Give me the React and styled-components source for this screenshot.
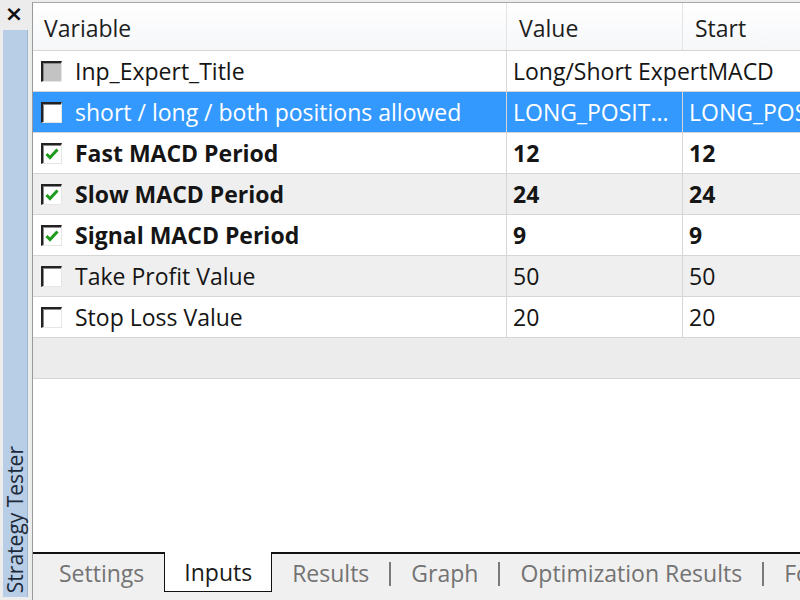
import styled, { createGlobalStyle, css } from "styled-components";

const GlobalStyle = createGlobalStyle`
  html, body {
    margin: 0;
    padding: 0;
    width: 800px;
    height: 600px;
    overflow: hidden;
    background: #ececec;
  }
  * {
    box-sizing: border-box;
  }
`;

const rows = [
  { name: "Inp_Expert_Title", value: "Long/Short ExpertMACD", start: "", check: "gray", span: true },
  { name: "short / long / both positions allowed", value: "LONG_POSIT...", start: "LONG_POSITION", check: "off", selected: true },
  { name: "Fast MACD Period", value: "12", start: "12", check: "on", bold: true },
  { name: "Slow MACD Period", value: "24", start: "24", check: "on", bold: true, alt: true },
  { name: "Signal MACD Period", value: "9", start: "9", check: "on", bold: true },
  { name: "Take Profit Value", value: "50", start: "50", check: "off", alt: true },
  { name: "Stop Loss Value", value: "20", start: "20", check: "off" },
];

const tabs = ["Settings", "Inputs", "Results", "Graph", "Optimization Results", "Forward Results"];

function CheckBox({ state }) {
  return (
    <Box $state={state}>
      {state === "on" && (
        <svg width="16" height="16" viewBox="0 0 16 16">
          <path d="M2.5 8 L6 11.5 L13.5 3.5" fill="none" stroke="#1c9b1c" strokeWidth="3" />
        </svg>
      )}
    </Box>
  );
}

function App() {
  return (
    <Window>
      <GlobalStyle />
      <SideBar>
        <CloseBtn>×</CloseBtn>
        <SideStrip>
          <SideTitle>Strategy Tester</SideTitle>
        </SideStrip>
      </SideBar>
      <Main>
        <Table>
          <HeaderRow>
            <HeadCell $first>Variable</HeadCell>
            <HeadCell>Value</HeadCell>
            <HeadCell>Start</HeadCell>
          </HeaderRow>
          {rows.map((r) => (
            <Row key={r.name} $selected={r.selected} $alt={r.alt} $bold={r.bold}>
              <NameCell>
                <CheckBox state={r.check} />
                <span>{r.name}</span>
              </NameCell>
              {r.span ? (
                <ValueCell $span>{r.value}</ValueCell>
              ) : (
                <>
                  <ValueCell>{r.value}</ValueCell>
                  <ValueCell>{r.start}</ValueCell>
                </>
              )}
            </Row>
          ))}
          <EmptyRow />
        </Table>
        <TabBar>
          {tabs.map((t, i) => (
            <TabGroup key={t}>
              {i > 2 && <TabSep />}
              <Tab $active={t === "Inputs"}>{t}</Tab>
            </TabGroup>
          ))}
        </TabBar>
      </Main>
    </Window>
  );
}

export default App;

const font = css`
  font-family: "Open Sans", "Liberation Sans", sans-serif;
  font-size: 23px;
`;

const Window = styled.div`
  display: flex;
  width: 800px;
  height: 600px;
  background: #ececec;
  ${font};
`;

const SideBar = styled.div`
  display: flex;
  flex-direction: column;
  width: 32px;
  flex-shrink: 0;
  padding-bottom: 3px;
`;

const CloseBtn = styled.div`
  height: 26px;
  display: flex;
  align-items: center;
  justify-content: center;
  padding-right: 4px;
  margin-bottom: 4px;
  font-family: "DejaVu Sans", sans-serif;
  font-weight: bold;
  font-size: 22px;
  color: #111;
`;

const SideStrip = styled.div`
  flex: 1;
  margin: 0 4px 0 3px;
  background: #b8cde6;
  border-right: 1px solid #9fb6d3;
  display: flex;
  align-items: flex-end;
  justify-content: center;
`;

const SideTitle = styled.div`
  writing-mode: vertical-rl;
  transform: rotate(180deg);
  color: #1d2a3a;
  font-size: 21px;
  line-height: 24px;
  padding-top: 4px;
  white-space: nowrap;
`;

const Main = styled.div`
  flex: 1;
  display: flex;
  flex-direction: column;
  margin-top: 2px;
  border-left: 1px solid #9a9a9a;
  border-top: 1px solid #a8a8a8;
  background: #fff;
  overflow: hidden;
`;

const Table = styled.div`
  flex: 1;
  display: flex;
  flex-direction: column;
  background: #fff;
`;

const gridCols = css`
  display: grid;
  grid-template-columns: 473px 176px 1fr;
`;

const HeaderRow = styled.div`
  ${gridCols};
  height: 48px;
  background: linear-gradient(#ffffff, #f6f7f9);
  border-bottom: 1px solid #d5d5d5;
`;

const HeadCell = styled.div`
  display: flex;
  align-items: center;
  padding-left: ${(p) => (p.$first ? "11px" : "12px")};
  padding-top: 2px;
  color: #1e1e1e;
  border-left: ${(p) => (p.$first ? "none" : "1px solid #e4e4e4")};
  white-space: nowrap;
`;

const Row = styled.div`
  ${gridCols};
  height: 41px;
  border-bottom: 1px solid #d6d6d6;
  background: ${(p) => (p.$selected ? "#3399ff" : p.$alt ? "#efefef" : "#fff")};
  color: ${(p) => (p.$selected ? "#fff" : "#151515")};
  font-weight: ${(p) => (p.$bold ? 700 : 400)};
`;

const NameCell = styled.div`
  display: flex;
  align-items: center;
  gap: 13px;
  padding-left: 8px;
  white-space: nowrap;
  overflow: hidden;
`;

const ValueCell = styled.div`
  display: flex;
  align-items: center;
  padding-left: 6px;
  border-left: 1px solid #d6d6d6;
  white-space: nowrap;
  overflow: hidden;
  grid-column: ${(p) => (p.$span ? "span 2" : "auto")};
`;

const Box = styled.div`
  width: 21px;
  height: 21px;
  flex-shrink: 0;
  display: flex;
  align-items: center;
  justify-content: center;
  border-top: 2px solid #222;
  border-left: 2px solid #222;
  border-right: 1px solid #e6e6e6;
  border-bottom: 1px solid #e6e6e6;
  background: ${(p) => (p.$state === "gray" ? "#c3c3c3" : "#fff")};
  box-shadow: inset 1px 1px 0 #8a8a8a;
`;

const EmptyRow = styled.div`
  height: 41px;
  background: #ececec;
  border-bottom: 1px solid #d6d6d6;
`;

const TabBar = styled.div`
  height: 48px;
  display: flex;
  align-items: flex-start;
  background: #f0f0f0;
  border-top: 2px solid #111;
  padding-left: 6px;
  white-space: nowrap;
`;

const TabGroup = styled.div`
  display: flex;
  align-items: flex-start;
`;

const TabSep = styled.div`
  width: 2px;
  height: 24px;
  margin-top: 8px;
  background: #7a7a7a;
`;

const Tab = styled.div`
  height: 38px;
  display: flex;
  align-items: center;
  padding: 0 20px;
  color: ${(p) => (p.$active ? "#1a1a1a" : "#737373")};
  ${(p) =>
    p.$active &&
    css`
      background: #fff;
      border: 1px solid #111;
      border-top: none;
      margin-top: -2px;
      height: 40px;
      padding: 0 19px;
    `}
`;
